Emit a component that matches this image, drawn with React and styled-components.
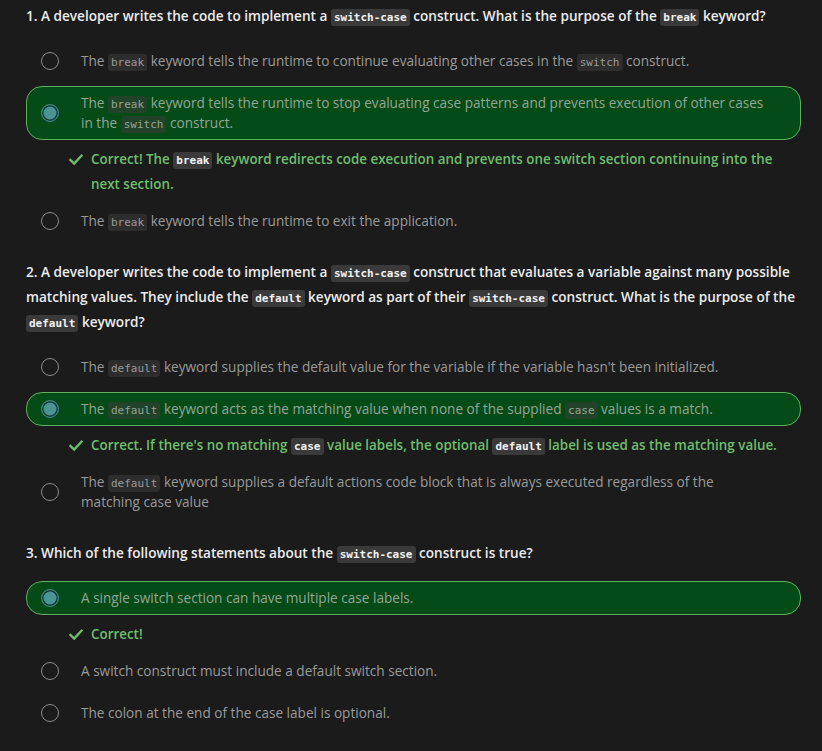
import React from "react";
import styled, { createGlobalStyle } from "styled-components";

const Global = createGlobalStyle`
  html, body { margin: 0; padding: 0; background: #1b1b1b; }
  body { font-family: "Open Sans", "Noto Sans", sans-serif; }
`;

const Page = styled.div`
  background: #1b1b1b;
  min-height: 751px;
  padding: 3px 21px 0 26px;
  box-sizing: border-box;
  display: flex;
  flex-direction: column;
  gap: 21px;
`;

const Question = styled.section`
  display: flex;
  flex-direction: column;
`;

const Heading = styled.h2`
  margin: 0 0 16px;
  font-size: 13.6px;
  font-weight: 600;
  line-height: 25px;
  color: #ececec;
`;

const List = styled.div`
  display: flex;
  flex-direction: column;
  gap: 8px;
`;

const Option = styled.div`
  display: flex;
  align-items: center;
  gap: 22px;
  box-sizing: border-box;
  min-height: 34px;
  padding: 6px 14px;
  border-radius: 16px;
  border: 1px solid ${(p) => (p.$selected ? "#5fae5f" : "transparent")};
  background: ${(p) => (p.$selected ? "#044b17" : "transparent")};
`;

const Radio = styled.span`
  flex: none;
  width: 18px;
  height: 18px;
  border-radius: 50%;
  box-sizing: border-box;
  border: 1.5px solid ${(p) => (p.$selected ? "#3d8585" : "#8c8c8c")};
  background: ${(p) => (p.$selected ? "#4a9494" : "transparent")};
  box-shadow: ${(p) => (p.$selected ? "inset 0 0 0 1.5px #163a36" : "none")};
`;

const OptionText = styled.div`
  font-size: 13.6px;
  line-height: 20px;
  color: ${(p) => (p.$selected ? "#95a595" : "#9a9a9a")};
  max-width: 688px;
`;

const Code = styled.code`
  font-family: "DejaVu Sans Mono", "Liberation Mono", monospace;
  font-size: 11px;
  line-height: 1;
  padding: 2px 3px;
  border-radius: 3px;
  background: ${(p) =>
    p.$tone === "strong" ? "#3a3a3a" : p.$tone === "sel" ? "#22432a" : "#2d2d2d"};
  color: ${(p) => (p.$tone === "strong" ? "#f2f2f2" : p.$tone === "sel" ? "#95a595" : "#9a9a9a")};
  font-weight: ${(p) => (p.$tone === "strong" ? 700 : 400)};
`;

const Feedback = styled.div`
  display: flex;
  align-items: flex-start;
  gap: 8px;
  padding-left: 43px;
  margin: -1px 0;
  font-size: 13.4px;
  font-weight: 600;
  line-height: 25px;
  color: #6cbf6c;
`;

const Check = styled.svg`
  flex: none;
  width: 14px;
  height: 25px;
`;

const CheckIcon = () => (
  <Check viewBox="0 0 14 25">
    <path d="M1.5 13 L5.2 16.6 L12.6 8.6" fill="none" stroke="#6cbf6c" strokeWidth="2.4" strokeLinecap="square" />
  </Check>
);

const C = ({ t, children }) => <Code $tone={t}>{children}</Code>;

const Opt = ({ selected, children }) => (
  <Option $selected={selected}>
    <Radio $selected={selected} />
    <OptionText $selected={selected}>{children}</OptionText>
  </Option>
);

export default function App() {
  return (
    <>
      <Global />
      <Page>
        <Question>
          <Heading>
            1. A developer writes the code to implement a <C t="strong">switch-case</C> construct. What is the purpose of the <C t="strong">break</C> keyword?
          </Heading>
          <List>
            <Opt>
              The <C>break</C> keyword tells the runtime to continue evaluating other cases in the <C>switch</C> construct.
            </Opt>
            <Opt selected>
              The <C t="sel">break</C> keyword tells the runtime to stop evaluating case patterns and prevents execution of other cases in the <C t="sel">switch</C> construct.
            </Opt>
            <Feedback>
              <CheckIcon />
              <span>
                Correct! The <C t="strong">break</C> keyword redirects code execution and prevents one switch section continuing into the next section.
              </span>
            </Feedback>
            <Opt>
              The <C>break</C> keyword tells the runtime to exit the application.
            </Opt>
          </List>
        </Question>

        <Question>
          <Heading>
            2. A developer writes the code to implement a <C t="strong">switch-case</C> construct that evaluates a variable against many possible matching values. They include the <C t="strong">default</C> keyword as part of their <C t="strong">switch-case</C> construct. What is the purpose of the <C t="strong">default</C> keyword?
          </Heading>
          <List>
            <Opt>
              The <C>default</C> keyword supplies the default value for the variable if the variable hasn't been initialized.
            </Opt>
            <Opt selected>
              The <C t="sel">default</C> keyword acts as the matching value when none of the supplied <C t="sel">case</C> values is a match.
            </Opt>
            <Feedback>
              <CheckIcon />
              <span>
                Correct. If there's no matching <C t="strong">case</C> value labels, the optional <C t="strong">default</C> label is used as the matching value.
              </span>
            </Feedback>
            <Opt>
              The <C>default</C> keyword supplies a default actions code block that is always executed regardless of the matching case value
            </Opt>
          </List>
        </Question>

        <Question>
          <Heading>
            3. Which of the following statements about the <C t="strong">switch-case</C> construct is true?
          </Heading>
          <List>
            <Opt selected>A single switch section can have multiple case labels.</Opt>
            <Feedback>
              <CheckIcon />
              <span>Correct!</span>
            </Feedback>
            <Opt>A switch construct must include a default switch section.</Opt>
            <Opt>The colon at the end of the case label is optional.</Opt>
          </List>
        </Question>
      </Page>
    </>
  );
}
